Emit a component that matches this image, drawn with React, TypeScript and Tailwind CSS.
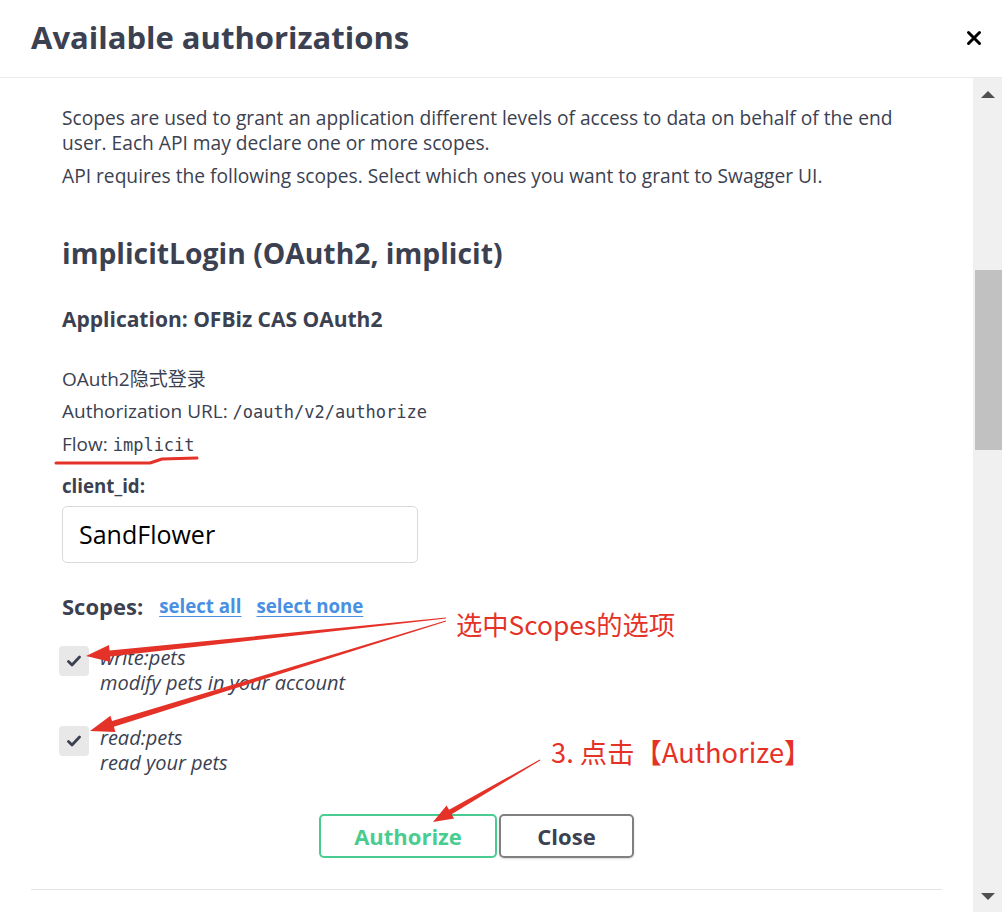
import React from 'react'

const sans = { fontFamily: '"Open Sans", "Noto Sans CJK SC", sans-serif' }
const mono = { fontFamily: '"DejaVu Sans Mono", monospace' }
const cjk = { fontFamily: '"Noto Sans CJK SC", sans-serif' }

type Pt = [number, number]

// tapered annotation arrow: thin at the tail, wide at the head
function arrowPoints(tail: Pt, tip: Pt, headLen: number, headW: number, shaftW: number, tailW: number) {
  const dx = tip[0] - tail[0]
  const dy = tip[1] - tail[1]
  const len = Math.hypot(dx, dy)
  const ux = dx / len
  const uy = dy / len
  const nx = -uy
  const ny = ux
  const bx = tip[0] - ux * headLen
  const by = tip[1] - uy * headLen
  const p = (x: number, y: number, off: number) => `${x + nx * off},${y + ny * off}`
  return [
    p(tail[0], tail[1], tailW / 2),
    p(bx, by, shaftW / 2),
    p(bx, by, headW / 2),
    `${tip[0]},${tip[1]}`,
    p(bx, by, -headW / 2),
    p(bx, by, -shaftW / 2),
    p(tail[0], tail[1], -tailW / 2),
  ].join(' ')
}

function Check() {
  return (
    <div className="w-[30px] h-[30px] shrink-0 rounded-[4px] bg-[#e8e8e8] flex items-center justify-center">
      <svg width="14" height="12" viewBox="0 0 14 12">
        <path d="M1.5 6.5 L5 10 L12.5 2" fill="none" stroke="#3b4151" strokeWidth="2.8" strokeLinecap="round" strokeLinejoin="round" />
      </svg>
    </div>
  )
}

function Scope({ name, desc, className }: { name: string; desc: string; className: string }) {
  return (
    <div className={`flex items-start gap-[11px] ${className}`}>
      <Check />
      <div className="italic text-[20px] leading-[25px] text-[#3b4151] -mt-[1px]">
        <div>{name}</div>
        <div>{desc}</div>
      </div>
    </div>
  )
}

export default function App() {
  return (
    <div className="relative w-[1002px] h-[912px] bg-white flex flex-col overflow-hidden text-[#3b4151]" style={sans}>
      <div className="h-[78px] shrink-0 border-b border-[#ebebeb] flex items-center justify-between pl-[31px] pr-[20px]">
        <h2 className="text-[31px] font-bold leading-none -mt-[2px]">Available authorizations</h2>
        <svg width="16" height="16" viewBox="0 0 16 16" className="-mt-[2px]">
          <path d="M2.5 2.5 L13.5 13.5 M13.5 2.5 L2.5 13.5" stroke="#000" strokeWidth="3" strokeLinecap="round" />
        </svg>
      </div>

      <div className="flex-1 flex min-h-0">
        <div className="flex-1 px-[31px]">
          <div className="pl-[31px] pt-[27px]">
            <p className="text-[19.2px] leading-[25px] pr-[30px]">
              Scopes are used to grant an application different levels of access to data on behalf of the end user. Each API may declare one or more scopes.
            </p>
            <p className="text-[19.2px] leading-[25px] mt-[8px]">
              API requires the following scopes. Select which ones you want to grant to Swagger UI.
            </p>
            <h4 className="text-[28.3px] font-bold leading-[34px] mt-[48px]">implicitLogin (OAuth2, implicit)</h4>
            <h6 className="text-[21px] font-bold leading-[28px] mt-[35px]">Application: OFBiz CAS OAuth2</h6>
            <div className="text-[19px] leading-[32px] mt-[30px]">
              <p>OAuth2隐式登录</p>
              <p>
                Authorization URL: <code className="text-[17px]" style={mono}>/oauth/v2/authorize</code>
              </p>
              <p>
                Flow: <code className="text-[17px]" style={mono}>implicit</code>
              </p>
            </div>
            <label className="block text-[18.7px] font-bold leading-[28px] mt-[11px]">client_id:</label>
            <div className="mt-[6px] w-[356px] h-[57px] border border-[#d9d9d9] rounded-[5px] flex items-center px-[16px] text-[25px] text-black">
              SandFlower
            </div>
            <div className="flex items-center h-[28px] mt-[29px]">
              <span className="text-[22px] font-bold">Scopes:</span>
              <a className="ml-[16px] text-[18.7px] font-bold text-[#4990e2] underline underline-offset-[3px]">select all</a>
              <a className="ml-[15px] text-[18.7px] font-bold text-[#4990e2] underline underline-offset-[3px]">select none</a>
            </div>
            <Scope name="write:pets" desc="modify pets in your account" className="mt-[26px] -ml-[3px]" />
            <Scope name="read:pets" desc="read your pets" className="mt-[31px] -ml-[3px]" />
            <div className="flex mt-[39px] pl-[257px] gap-[2px]">
              <button className="w-[178px] h-[44px] border-2 border-[#49cc90] rounded-[5px] text-[22px] font-bold text-[#49cc90]">Authorize</button>
              <button className="w-[135px] h-[44px] border-2 border-[#808080] rounded-[5px] text-[22px] font-bold text-[#3b4151] shadow-[0_1px_2px_rgba(0,0,0,0.15)]">Close</button>
            </div>
          </div>
          <div className="mt-[31px] border-t border-[#e5e5e5]" />
        </div>

        <div className="w-[29px] shrink-0 bg-[#f0f0f0] flex flex-col items-center">
          <svg width="14" height="8" viewBox="0 0 14 8" className="mt-[12px]">
            <path d="M0 8 L7 1 L14 8 Z" fill="#505050" />
          </svg>
          <div className="mt-[172px] self-end w-[27px] h-[180px] bg-[#c1c1c1]" />
          <div className="flex-1" />
          <svg width="14" height="8" viewBox="0 0 14 8" className="mb-[11px]">
            <path d="M0 0 L14 0 L7 7 Z" fill="#505050" />
          </svg>
        </div>
      </div>

      {/* annotations drawn over the screenshot */}
      <svg className="absolute inset-0 pointer-events-none" width="1002" height="912">
        <path d="M56 463 L150 463 L162 459 L197 458" fill="none" stroke="#e53228" strokeWidth="3" strokeLinecap="round" strokeLinejoin="round" />
        <polygon points={arrowPoints([446, 618], [86, 656], 24, 17, 6, 1)} fill="#e53228" />
        <polygon points={arrowPoints([446, 621], [90, 731], 24, 17, 6, 1)} fill="#e53228" />
        <polygon points={arrowPoints([540, 760], [433, 822], 20, 15, 5, 1)} fill="#e53228" />
      </svg>
      <div className="absolute left-[456px] top-[607px] text-[26.3px] leading-[34px] text-[#e53228]" style={cjk}>
        选中Scopes的选项
      </div>
      <div className="absolute left-[551px] top-[734px] text-[27.3px] leading-[34px] text-[#e53228]" style={cjk}>
        3. 点击【Authorize】
      </div>
    </div>
  )
}
